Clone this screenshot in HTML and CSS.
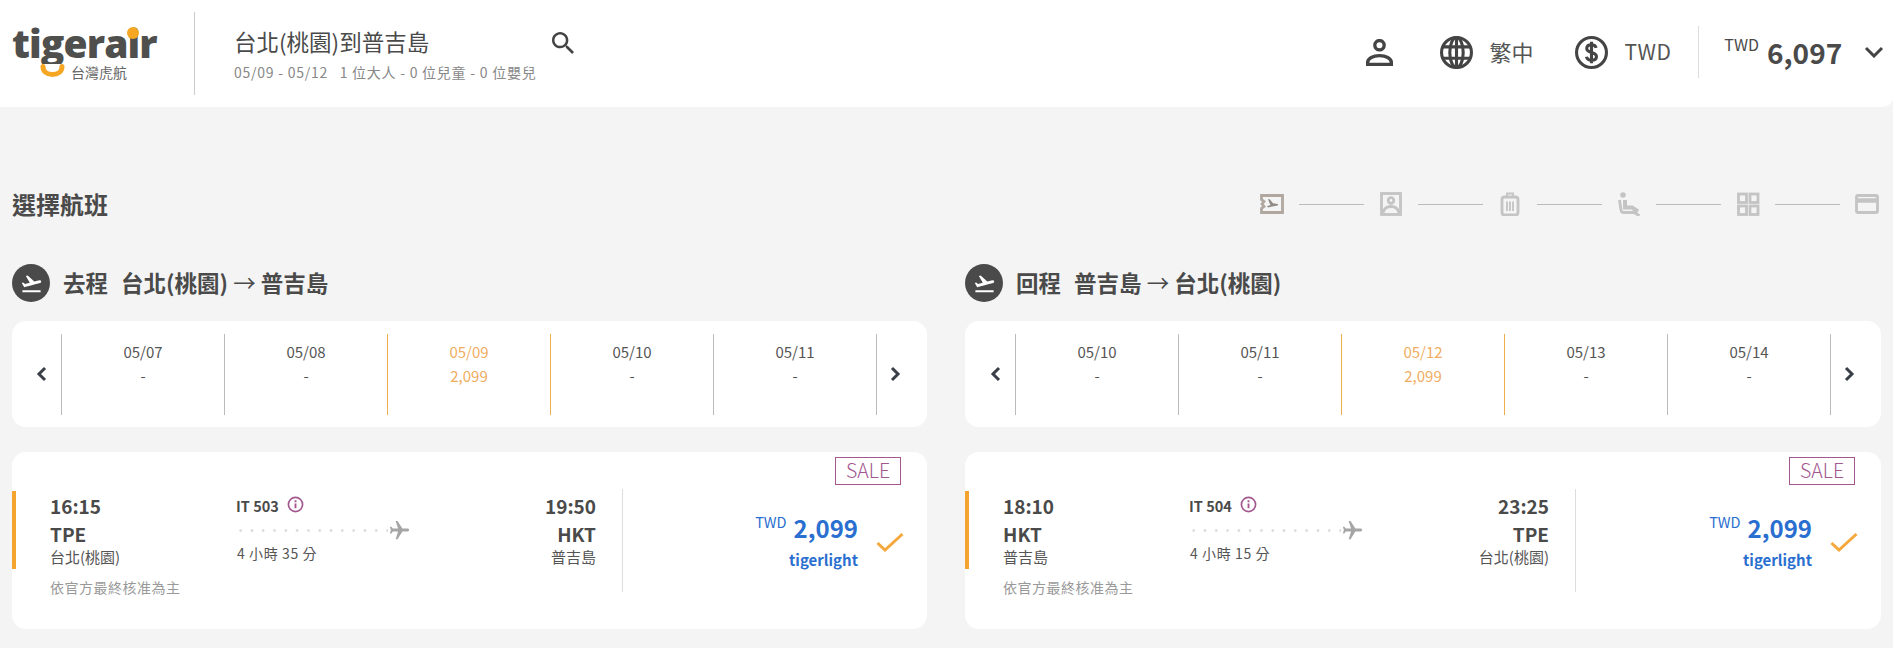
FILE: index.html
```html
<!DOCTYPE html>
<html>
<head>
	<title>選擇航班</title>
	<link rel="stylesheet" href="styles.css">
</head>
<body>
	<svg class="sprites" width="0" height="0">
		<symbol id="takeoff" viewBox="0 0 24 24"><path d="M2.500 19h19v2h-19zm19.570-9.360c-.21-.8-1.040-1.280-1.840-1.060L14.920 10l-6.900-6.430-1.930.51 4.140 7.170-4.970 1.330-1.970-1.540-1.450.39 1.820 3.160.77 1.330 1.600-.43 5.310-1.420 4.350-1.160L21 11.490c.81-.23 1.280-1.050 1.070-1.850z"/></symbol>
		<symbol id="plane" viewBox="0 0 24 24"><path transform="rotate(90 12 12)" d="M21 16v-2l-8-5V3.500c0-.83-.67-1.500-1.500-1.500S10 2.670 10 3.500V9l-8 5v2l8-2.500V19l-2 1.500V22l3.500-1 3.500 1v-1.500L13 19v-5.500l8 2.500z"/></symbol>
		<symbol id="prev" viewBox="0 0 12 16"><path d="M9 2 3 8l6 6" fill="none" stroke-width="3"/></symbol>
		<symbol id="next" viewBox="0 0 12 16"><path d="m3 2 6 6-6 6" fill="none" stroke-width="3"/></symbol>
		<symbol id="check" viewBox="0 0 28 20"><path d="M1.500 11 9 18 26.500 2" fill="none" stroke-width="3"/></symbol>
		<symbol id="info" viewBox="0 0 18 18"><circle cx="9" cy="9" r="7.500" fill="none" stroke-width="1.800"/><path d="M9 8v5M9 4.500v2" fill="none" stroke-width="2"/></symbol>
	</svg>

	<header class="topbar">
		<div class="logo">
			<div class="logo-word">tigerair</div>
			<span class="logo-dot"></span>
			<div class="logo-sub">
				<svg class="logo-smile" viewBox="0 0 25 13"><path d="M3 2.500c0 5 4 8 9.500 8s9.500-3 9.500-8" fill="none" stroke="#f5a623" stroke-width="5" stroke-linecap="round"/></svg>
				<span>台灣虎航</span>
			</div>
		</div>
		<div class="search-summary">
			<div class="route-title">台北(桃園)到普吉島</div>
			<div class="route-sub">05/09 - 05/12&nbsp;&nbsp; 1 位大人 - 0 位兒童 - 0 位嬰兒</div>
		</div>
		<svg class="search-icon" viewBox="3 3 17.500 17.500"><path d="M15.500 14h-.79l-.28-.27C15.410 12.590 16 11.110 16 9.500 16 5.910 13.090 3 9.500 3S3 5.910 3 9.500 5.910 16 9.500 16c1.610 0 3.090-.59 4.230-1.570l.27.28v.79l5 4.990L20.490 19l-4.990-5zm-6 0C7.010 14 5 11.990 5 9.500S7.010 5 9.500 5 14 7.010 14 9.500 11.990 14 9.500 14z"/></svg>
		<div class="top-actions">
			<svg class="icon-user" viewBox="0 0 26 26"><circle cx="13" cy="6" r="4.500"/><path d="M1.500 24.500v-1.500C1.500 18.500 7 16 13 16s11.500 2.500 11.500 7v1.500z"/></svg>
			<div class="top-item lang">
				<svg class="icon-round" viewBox="0 0 32 32"><circle cx="16" cy="16" r="14.500"/><ellipse cx="16" cy="16" rx="6.500" ry="14.500"/><path d="M16 1.500v29M3 10.500h26M3 21.500h26"/></svg>
				<span>繁中</span>
			</div>
			<div class="top-item currency">
				<svg class="icon-round" viewBox="0 0 32 32"><circle cx="16" cy="16" r="14.500"/><path d="M20.500 11.500c-.5-2-2.300-3-4.500-3-2.600 0-4.600 1.300-4.600 3.600 0 5 9.400 2.800 9.400 7.800 0 2.300-2 3.600-4.800 3.600-2.500 0-4.400-1.200-4.900-3.400M16 5.500v21"/></svg>
				<span>TWD</span>
			</div>
			<div class="top-total">
				<span class="total-cur">TWD</span>
				<span class="total-num">6,097</span>
				<svg class="total-arrow" viewBox="0 0 20 12"><path d="m2 2 8 8 8-8"/></svg>
			</div>
		</div>
	</header>

	<main class="content">
		<div class="page-head">
			<h1>選擇航班</h1>
			<div class="steps">
				<svg class="step active" viewBox="0 0 24 24"><path d="M1.500 3.500h21v17h-21v-4l2.500-2-2-2.500 2-2.500-2.500-2z"/><path class="fill" d="m8 7 2 .4 3 3.800 4.500.8c.8.2.8 1.200 0 1.400L8 15.500l-1-1.200 3.500-1.300L9.500 11z"/></svg>
				<span class="step-line"></span>
				<svg class="step" viewBox="0 0 24 24"><rect x="2.500" y="1.500" width="19" height="21"/><circle cx="12" cy="8.500" r="2.800"/><path d="M4 21c1-5 4-6.500 8-6.500s7 1.500 8 6.500"/></svg>
				<span class="step-line"></span>
				<svg class="step" viewBox="0 0 24 24"><rect x="4" y="5" width="16" height="18" rx="2.500"/><path d="M9 5V1.500h6V5M9 9.500v9.500M12 9.500v9.500M15 9.500v9.500" stroke-width="1.800"/></svg>
				<span class="step-line"></span>
				<svg class="step" viewBox="0 0 24 24"><circle class="fill" cx="6" cy="3" r="2.800"/><path d="M2.500 8 4 18c.2 1.500 1 2.500 2.500 2.500H17l5.500 3.200" stroke-width="2.800"/><path d="M8 8v7.500h7l6 4" stroke-width="4"/></svg>
				<span class="step-line"></span>
				<svg class="step" viewBox="0 0 24 24"><rect x="2.500" y="2" width="8" height="8.500"/><rect x="14" y="2" width="8" height="8.500"/><rect x="2.500" y="14" width="8" height="8.500"/><rect x="14" y="14" width="8" height="8.500"/></svg>
				<span class="step-line"></span>
				<svg class="step" viewBox="0 0 24 24"><rect x="1.500" y="3.500" width="21" height="17" rx="1.500"/><path class="bar" d="M2 8.500h20"/></svg>
			</div>
		</div>

		<div class="columns" id="columns"></div>
	</main>

	<script>
		// One column per leg of the trip
		const legs = [
			{
				label: "去程", from: "台北(桃園)", to: "普吉島",
				dates: ["05/07", "05/08", "05/09", "05/10", "05/11"],
				depart: "16:15", arrive: "19:50", fromCode: "TPE", toCode: "HKT",
				flight: "IT 503", duration: "4 小時 35 分"
			},
			{
				label: "回程", from: "普吉島", to: "台北(桃園)",
				dates: ["05/10", "05/11", "05/12", "05/13", "05/14"],
				depart: "18:10", arrive: "23:25", fromCode: "HKT", toCode: "TPE",
				flight: "IT 504", duration: "4 小時 15 分"
			}
		];

		function use(id, cls) {
			return `<svg class="${cls}"><use href="#${id}"/></svg>`;
		}

		function dateCell(date, i) {
			let on = i === 2;
			return `<div class="date-cell${on ? " selected" : ""}">
				<div>${date}</div>
				<div>${on ? "2,099" : "-"}</div>
			</div>`;
		}

		let html = "";
		for (let leg of legs) {
			html += `<section>
				<h2 class="leg-title">
					<span class="leg-badge">${use("takeoff", "leg-icon")}</span>
					<span class="leg-text">${leg.label}</span>
					<span class="leg-text leg-route">${leg.from} <span class="leg-arrow">→</span> ${leg.to}</span>
				</h2>
				<div class="date-card">
					<div class="date-nav">${use("prev", "nav-icon")}</div>
					${leg.dates.map(dateCell).join("")}
					<div class="date-nav next">${use("next", "nav-icon")}</div>
				</div>
				<div class="flight-card">
					<span class="sale">SALE</span>
					<div class="flight-info">
						<div class="stop">
							<div class="time">${leg.depart}</div>
							<div class="code">${leg.fromCode}</div>
							<div class="city">${leg.from}</div>
							<div class="note">依官方最終核准為主</div>
						</div>
						<div class="middle">
							<div class="flight-no">${leg.flight} ${use("info", "info-icon")}</div>
							<div class="track"><span class="dots"></span>${use("plane", "plane-icon")}</div>
							<div class="duration">${leg.duration}</div>
						</div>
						<div class="stop end">
							<div class="time">${leg.arrive}</div>
							<div class="code">${leg.toCode}</div>
							<div class="city">${leg.to}</div>
						</div>
					</div>
					<div class="fare">
						<div class="fare-text">
							<div class="fare-price"><span class="fare-cur">TWD</span><span class="fare-num">2,099</span></div>
							<div class="fare-name">tigerlight</div>
						</div>
						${use("check", "check-icon")}
					</div>
				</div>
			</section>`;
		}
		document.querySelector("#columns").innerHTML = html;
	</script>
</body>
</html>
```

FILE: styles.css
```css
* {
	box-sizing: border-box;
}
body {
	margin: 0;
	background-color: #f4f4f4;
	color: #4a4a4a;
	font-family: "Noto Sans CJK TC", "Noto Sans", sans-serif;
	overflow: hidden;
}
.sprites {
	position: absolute;
}

/* top bar */
.topbar {
	display: flex;
	align-items: center;
	height: 107px;
	background-color: #fff;
	padding-left: 12px;
	border-radius: 0 0 10px 0;
}
.logo {
	position: relative;
	width: 183px;
	height: 83px;
	border-right: 1px solid #ccc;
	padding-top: 10px;
}
.logo-word {
	width: 150px;
	height: 42px;
	font-family: "Open Sans", sans-serif;
	font-weight: 800;
	font-size: 39px;
	line-height: 42px;
	letter-spacing: -.9px;
	color: #4f4f4d;
	clip-path: inset(0 0 0 0);
}
.logo-dot {
	position: absolute;
	left: 115px;
	top: 15px;
	width: 12px;
	height: 12px;
	border-radius: 50%;
	background-color: #f5a623;
}
.logo-sub {
	display: flex;
	align-items: flex-start;
	margin-left: 28px;
	font-size: 14px;
	line-height: 16px;
	color: #666;
}
.logo-smile {
	width: 25px;
	height: 13px;
	margin-right: 6px;
}
.search-summary {
	margin-left: 39px;
	width: 318px;
}
.route-title {
	font-size: 22.500px;
	line-height: 30px;
}
.route-sub {
	margin-top: 6px;
	font-size: 14px;
	line-height: 20px;
	color: #888;
	letter-spacing: .75px;
	white-space: nowrap;
}
.search-icon {
	width: 22px;
	height: 22px;
	margin-bottom: 22px;
	fill: #444;
}
.top-actions {
	display: flex;
	align-items: center;
	margin-left: auto;
	margin-bottom: 3px;
}
.icon-user {
	width: 27px;
	height: 27px;
	fill: none;
	stroke: #444;
	stroke-width: 3.200;
	margin-right: 47px;
}
.top-item {
	display: flex;
	align-items: center;
	font-size: 22px;
	color: #555;
}
.top-item span {
	margin-bottom: 2px;
}
.lang {
	margin-right: 42px;
}
.icon-round {
	width: 33px;
	height: 33px;
	fill: none;
	stroke: #444;
	stroke-width: 3;
	margin-right: 16px;
}
.currency span {
	font-size: 21px;
	letter-spacing: .5px;
}
.top-total {
	display: flex;
	align-items: center;
	height: 52px;
	margin-left: 27px;
	padding-left: 25px;
	padding-right: 9px;
	border-left: 1px solid #ddd;
}
.total-cur {
	font-size: 16px;
	line-height: 20px;
	margin-bottom: 16px;
	margin-right: 8px;
}
.total-num {
	font-size: 28px;
	font-weight: 700;
	line-height: 40px;
	width: 73px;
	margin-right: 24px;
	margin-bottom: 1px;
}
.total-arrow {
	width: 20px;
	height: 12px;
	fill: none;
	stroke: #444;
	stroke-width: 3;
}

/* page */
.content {
	padding: 0 12px;
}
.page-head {
	display: flex;
	align-items: center;
	justify-content: space-between;
	height: 50px;
	margin-top: 73px;
}
h1 {
	margin: 0 0 2px;
	font-size: 24px;
	font-weight: 700;
	line-height: 48px;
}
.steps {
	display: flex;
	align-items: center;
	gap: 15px;
	margin-right: 2px;
	margin-bottom: 2px;
}
.step {
	width: 24px;
	height: 24px;
	fill: none;
	stroke: #c4c4c4;
	stroke-width: 2.800;
}
.step.active {
	stroke: #b0a8a0;
}
.step .fill {
	fill: #c4c4c4;
	stroke: none;
}
.step.active .fill {
	fill: #8f8a85;
}
.step .bar {
	stroke-width: 4.500;
}
.step-line {
	width: 65px;
	height: 1px;
	background-color: #bbb;
}
.columns {
	display: grid;
	grid-template-columns: 915px 916px;
	gap: 38px;
	margin-top: 34px;
}

/* leg heading */
.leg-title {
	display: flex;
	align-items: center;
	height: 38px;
	margin: 0 0 19px;
	font-size: 22.500px;
	font-weight: 700;
}
.leg-text {
	margin-bottom: 2px;
}
.leg-badge {
	display: flex;
	align-items: center;
	justify-content: center;
	width: 38px;
	height: 38px;
	margin-right: 13px;
	border-radius: 50%;
	background-color: #4a4a4a;
}
.leg-icon {
	width: 23px;
	height: 23px;
	fill: #fff;
}
.leg-route {
	margin-left: 13px;
}
.leg-arrow {
	font-weight: 400;
}

/* date strip */
.date-card {
	display: flex;
	align-items: center;
	height: 106px;
	padding: 0 0 0 50px;
	background-color: #fff;
	border-radius: 14px;
}
section:first-child .date-card {
	padding-left: 49px;
}
.date-nav {
	position: relative;
	width: 0;
	flex: none;
}
.date-nav .nav-icon {
	position: absolute;
	left: -25px;
	top: -8px;
}
.date-nav.next {
	width: 37px;
	height: 81px;
	border-left: 1px solid #bbb;
	display: flex;
	align-items: center;
	justify-content: center;
}
.date-nav.next .nav-icon {
	position: static;
}
.nav-icon {
	width: 12px;
	height: 16px;
	stroke: #3a3f47;
}
.date-cell {
	width: 163px;
	height: 81px;
	border-left: 1px solid #bbb;
	text-align: center;
	font-size: 15px;
	line-height: 24px;
	color: #555;
	padding-top: 6px;
}
.date-cell.selected {
	color: #f0ad62;
	border-left-color: #f0ad4e;
}
.date-cell.selected + .date-cell {
	border-left-color: #f0ad4e;
}

/* flight card */
.flight-card {
	position: relative;
	display: flex;
	align-items: flex-start;
	height: 177px;
	margin-top: 25px;
	padding-top: 37px;
	background-color: #fff;
	border-radius: 14px;
}
.flight-card::before {
	content: "";
	position: absolute;
	left: 0;
	top: 39px;
	width: 4px;
	height: 78px;
	background-color: #f5a52f;
}
.sale {
	position: absolute;
	right: 26px;
	top: 5px;
	width: 66px;
	height: 28px;
	border: 1px solid #a2588f;
	color: #a2588f;
	font-size: 19.500px;
	font-weight: 300;
	line-height: 24px;
	text-align: center;
}
.flight-info {
	display: flex;
	width: 611px;
	height: 103px;
	padding: 3px 26px 0 38px;
	border-right: 1px solid #ddd;
}
.stop {
	width: 187px;
	flex: none;
}
.stop.end {
	width: 160px;
	margin-left: auto;
	text-align: right;
}
.time, .code {
	font-size: 19px;
	font-weight: 700;
	line-height: 28px;
}
.city {
	margin-top: -1px;
	font-size: 15px;
	line-height: 20px;
	color: #555;
}
.note {
	margin-top: 10px;
	font-size: 14px;
	line-height: 20px;
	color: #999;
	letter-spacing: .5px;
	white-space: nowrap;
}
.middle {
	width: 180px;
	font-size: 14px;
}
.flight-no {
	display: flex;
	align-items: center;
	height: 27px;
	font-size: 14.500px;
	font-weight: 700;
	margin-left: -1px;
}
.info-icon {
	width: 17px;
	height: 17px;
	margin-left: 8px;
	margin-bottom: 2px;
	stroke: #a2588f;
}
.track {
	display: flex;
	align-items: center;
	height: 18px;
	margin-top: 2px;
	margin-left: -2px;
}
.dots {
	width: 153px;
	height: 3px;
	background-image: radial-gradient(circle, #ddd 1.200px, transparent 1.600px);
	background-size: 11.300px 3px;
}
.plane-icon {
	width: 23px;
	height: 23px;
	flex: none;
	fill: #a5a5a5;
}
.duration {
	margin-top: 4px;
	line-height: 20px;
	letter-spacing: .6px;
	color: #555;
}
.fare {
	display: flex;
	align-items: flex-start;
	margin-left: auto;
	padding-right: 23px;
	padding-top: 22px;
	color: #2a6fd0;
}
.fare-text {
	text-align: right;
}
.fare-price {
	display: flex;
	align-items: flex-start;
	justify-content: flex-end;
}
.fare-cur {
	font-size: 14.500px;
	line-height: 20px;
	margin-top: 1px;
	margin-right: 7px;
}
.fare-num {
	font-size: 24px;
	font-weight: 700;
	line-height: 34px;
}
.fare-name {
	font-size: 15px;
	font-weight: 700;
	line-height: 22px;
	margin-top: 4px;
}
.check-icon {
	width: 28px;
	height: 20px;
	margin-left: 18px;
	margin-top: 21px;
	stroke: #f5a83b;
}
```
